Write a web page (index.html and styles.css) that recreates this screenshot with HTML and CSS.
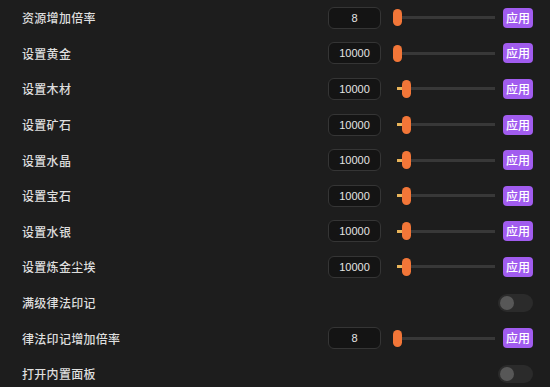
FILE: index.html
```html
<!DOCTYPE html>
<html>
<head>
	<meta charset="utf-8">
	<title>设置</title>
	<link rel="stylesheet" href="styles.css">
</head>
<body>
	<div class="panel">
		<div class="row">
			<span class="label">资源增加倍率</span>
			<div class="num">8</div>
			<div class="slider"><span class="thumb"></span><span class="track"></span></div>
			<button class="apply">应用</button>
		</div>
		<div class="row">
			<span class="label">设置黄金</span>
			<div class="num">10000</div>
			<div class="slider"><span class="thumb"></span><span class="track"></span></div>
			<button class="apply">应用</button>
		</div>
		<div class="row">
			<span class="label">设置木材</span>
			<div class="num">10000</div>
			<div class="slider moved"><span class="fill"></span><span class="thumb"></span><span class="track"></span></div>
			<button class="apply">应用</button>
		</div>
		<div class="row">
			<span class="label">设置矿石</span>
			<div class="num">10000</div>
			<div class="slider moved"><span class="fill"></span><span class="thumb"></span><span class="track"></span></div>
			<button class="apply">应用</button>
		</div>
		<div class="row">
			<span class="label">设置水晶</span>
			<div class="num">10000</div>
			<div class="slider moved"><span class="fill"></span><span class="thumb"></span><span class="track"></span></div>
			<button class="apply">应用</button>
		</div>
		<div class="row">
			<span class="label">设置宝石</span>
			<div class="num">10000</div>
			<div class="slider moved"><span class="fill"></span><span class="thumb"></span><span class="track"></span></div>
			<button class="apply">应用</button>
		</div>
		<div class="row">
			<span class="label">设置水银</span>
			<div class="num">10000</div>
			<div class="slider moved"><span class="fill"></span><span class="thumb"></span><span class="track"></span></div>
			<button class="apply">应用</button>
		</div>
		<div class="row">
			<span class="label">设置炼金尘埃</span>
			<div class="num">10000</div>
			<div class="slider moved"><span class="fill"></span><span class="thumb"></span><span class="track"></span></div>
			<button class="apply">应用</button>
		</div>
		<div class="row">
			<span class="label">满级律法印记</span>
			<span class="toggle"><span class="knob"></span></span>
		</div>
		<div class="row">
			<span class="label">律法印记增加倍率</span>
			<div class="num">8</div>
			<div class="slider"><span class="thumb"></span><span class="track"></span></div>
			<button class="apply">应用</button>
		</div>
		<div class="row">
			<span class="label">打开内置面板</span>
			<span class="toggle"><span class="knob"></span></span>
		</div>
	</div>
</body>
</html>
```

FILE: styles.css
```css
body
{
	margin: 0;
	background: #1d1d1d;
	font-family: "Noto Sans CJK SC", "Noto Sans", sans-serif;
	color: #dedede;
	overflow: hidden;
}

.panel
{
	padding: 0 17px 0 22px;
}

.row
{
	display: flex;
	align-items: center;
	height: 35.6px;
}

.label
{
	flex: 1;
	font-size: 12px;
	font-weight: 500;
	letter-spacing: 0.3px;
}

.num
{
	width: 51px;
	height: 20px;
	line-height: 20px;
	text-align: center;
	font-family: "Liberation Sans", sans-serif;
	font-size: 11px;
	color: #e4e4e4;
	background: #141414;
	border: 1px solid #353535;
	border-radius: 6px;
}

.slider
{
	display: flex;
	align-items: center;
	width: 102px;
	margin-left: 12px;
}

.slider.moved .fill
{
	width: 5px;
	height: 3px;
	margin-left: 4px;
	background: #e8b45a;
}

.thumb
{
	width: 9px;
	height: 17px;
	border-radius: 5px;
	background: #f27638;
}

.slider.moved .thumb
{
	height: 18px;
}

.track
{
	flex: 1;
	height: 3px;
	background: #383838;
}

.apply
{
	width: 30px;
	height: 20px;
	margin-left: 8px;
	padding: 0;
	border: none;
	border-radius: 4px;
	background: #a15cef;
	color: #fff;
	font-family: "Noto Sans CJK SC", sans-serif;
	font-size: 12px;
	font-weight: 500;
	line-height: 20px;
}

.toggle
{
	display: flex;
	align-items: center;
	width: 35px;
	height: 18px;
	border-radius: 9px;
	background: #2b2b2b;
}

.knob
{
	width: 14px;
	height: 14px;
	margin-left: 2px;
	border-radius: 50%;
	background: #575757;
}
```
